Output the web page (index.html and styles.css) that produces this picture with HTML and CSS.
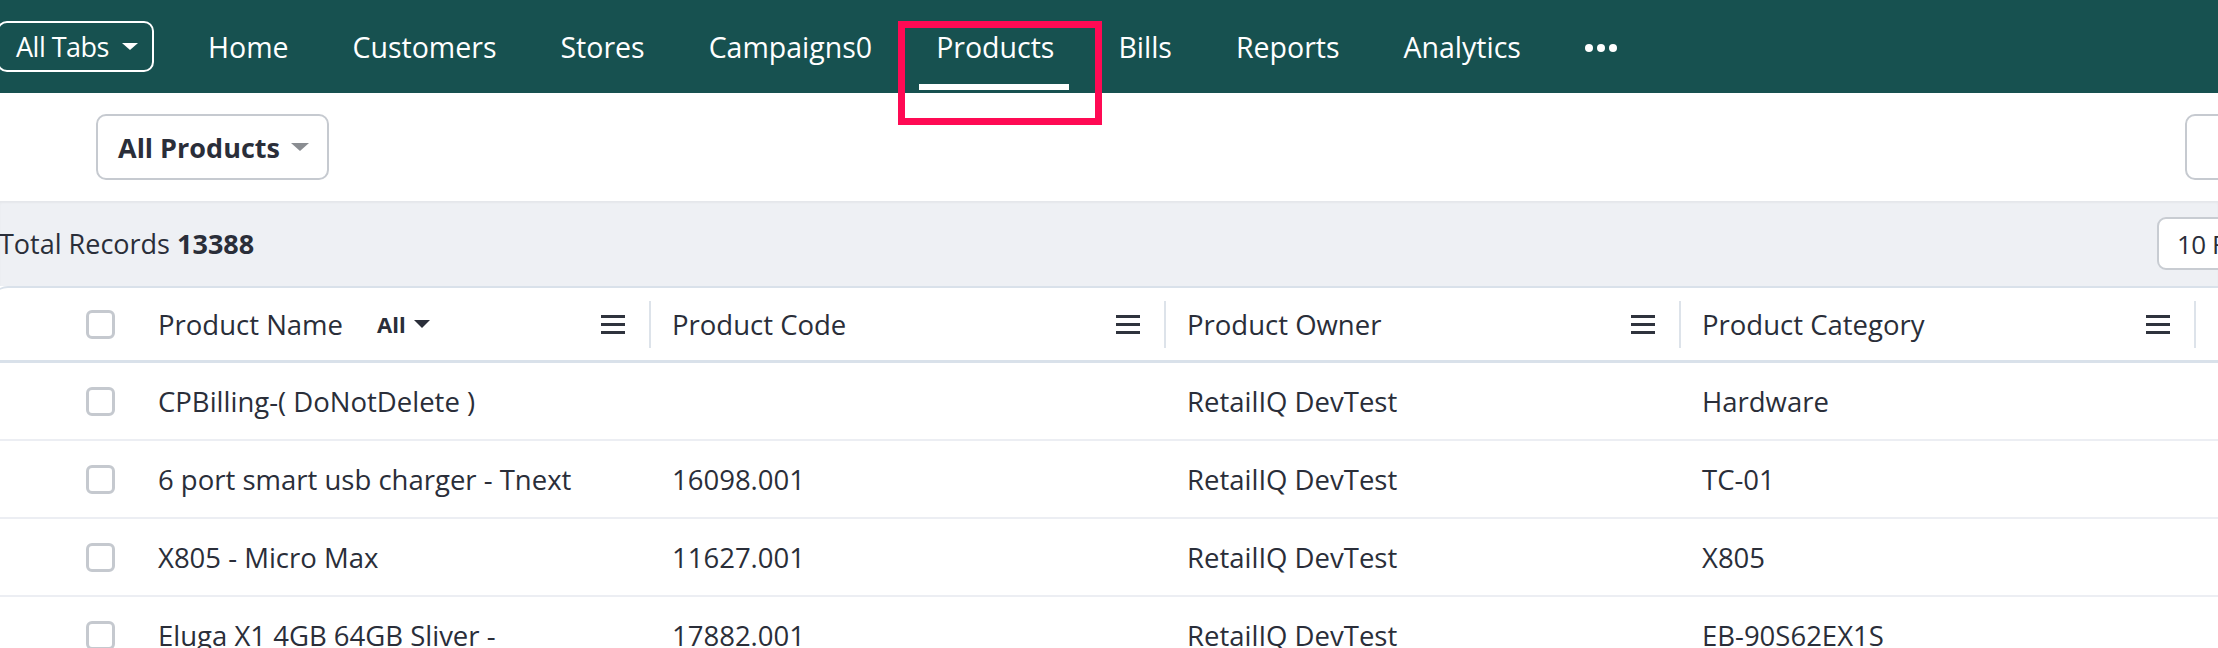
FILE: index.html
```html
<!DOCTYPE html>
<html lang="en">
<head>
  <meta charset="UTF-8" />
  <title>Products</title>
  <link rel="stylesheet" href="styles.css">
</head>
<body>
  <!-- Top navigation -->
  <header class="topnav">
    <button class="tabs-btn">All Tabs <span class="caret-white"></span></button>
    <nav class="nav-links">
      <a class="nav-link">Home</a>
      <a class="nav-link">Customers</a>
      <a class="nav-link">Stores</a>
      <a class="nav-link">Campaigns0</a>
      <a class="nav-link active">Products<span class="underline"></span><span class="highlight"></span></a>
      <a class="nav-link">Bills</a>
      <a class="nav-link">Reports</a>
      <a class="nav-link">Analytics</a>
      <a class="nav-link more">
        <svg width="32" height="10" viewBox="0 0 32 10"><circle cx="4" cy="5" r="4" fill="#fff"/><circle cx="16" cy="5" r="4" fill="#fff"/><circle cx="28" cy="5" r="4" fill="#fff"/></svg>
      </a>
    </nav>
  </header>

  <!-- View toolbar -->
  <div class="toolbar">
    <button class="view-btn">All Products <span class="caret-gray"></span></button>
    <button class="action-btn"></button>
  </div>

  <div class="records-bar">
    <span class="total">Total Records <b>13388</b></span>
    <div class="per-page">10 Records</div>
  </div>

  <!-- Products table -->
  <div class="table">
    <div class="row head">
      <div class="cell">
        <div class="th first">
          <span class="checkbox"></span>
          <span class="th-label">Product Name</span>
          <span class="filter">All <span class="caret-dark"></span></span>
          <svg class="menu" width="24" height="20" viewBox="0 0 24 20"><rect y="1" width="24" height="3" fill="#2f333d"/><rect y="9" width="24" height="3" fill="#2f333d"/><rect y="17" width="24" height="3" fill="#2f333d"/></svg>
        </div>
      </div>
      <div class="cell">
        <div class="th">
          <span class="th-label">Product Code</span>
          <svg class="menu" width="24" height="20" viewBox="0 0 24 20"><rect y="1" width="24" height="3" fill="#2f333d"/><rect y="9" width="24" height="3" fill="#2f333d"/><rect y="17" width="24" height="3" fill="#2f333d"/></svg>
        </div>
      </div>
      <div class="cell">
        <div class="th">
          <span class="th-label">Product Owner</span>
          <svg class="menu" width="24" height="20" viewBox="0 0 24 20"><rect y="1" width="24" height="3" fill="#2f333d"/><rect y="9" width="24" height="3" fill="#2f333d"/><rect y="17" width="24" height="3" fill="#2f333d"/></svg>
        </div>
      </div>
      <div class="cell">
        <div class="th">
          <span class="th-label">Product Category</span>
          <svg class="menu" width="24" height="20" viewBox="0 0 24 20"><rect y="1" width="24" height="3" fill="#2f333d"/><rect y="9" width="24" height="3" fill="#2f333d"/><rect y="17" width="24" height="3" fill="#2f333d"/></svg>
        </div>
      </div>
      <div class="cell">
        <div class="th last"><span class="th-label muted">Unit Price</span></div>
      </div>
    </div>

    <div class="row">
      <div class="cell first"><span class="checkbox"></span>CPBilling-( DoNotDelete )</div>
      <div class="cell"></div>
      <div class="cell">RetailIQ DevTest</div>
      <div class="cell">Hardware</div>
      <div class="cell">Rs.0.00</div>
    </div>
    <div class="row">
      <div class="cell first"><span class="checkbox"></span>6 port smart usb charger - Tnext</div>
      <div class="cell">16098.001</div>
      <div class="cell">RetailIQ DevTest</div>
      <div class="cell">TC-01</div>
      <div class="cell">Rs.0.00</div>
    </div>
    <div class="row">
      <div class="cell first"><span class="checkbox"></span>X805 - Micro Max</div>
      <div class="cell">11627.001</div>
      <div class="cell">RetailIQ DevTest</div>
      <div class="cell">X805</div>
      <div class="cell">Rs.0.00</div>
    </div>
    <div class="row">
      <div class="cell first"><span class="checkbox"></span>Eluga X1 4GB 64GB Sliver -</div>
      <div class="cell">17882.001</div>
      <div class="cell">RetailIQ DevTest</div>
      <div class="cell">EB-90S62EX1S</div>
      <div class="cell">Rs.0.00</div>
    </div>
  </div>
</body>
</html>
```

FILE: styles.css
```css
:root {
  --nav-bg: #175150;
  --text: #2a2e39;
  --line: #d9e1ea;
  --row-line: #eceef3;
  --gray-bg: #eef0f4;
  --mark: #ff0a54;
}

body {
  margin: 0;
  width: 2218px;
  height: 648px;
  overflow: hidden;
  font-family: 'Open Sans', 'Liberation Sans', sans-serif;
  color: var(--text);
  background: #fff;
}

/* top nav */
.topnav {
  display: flex;
  align-items: center;
  height: 93px;
  background: var(--nav-bg);
}

.tabs-btn {
  display: flex;
  align-items: center;
  gap: 13px;
  height: 51px;
  margin-left: -3px;
  padding: 0 14px 0 17px;
  background: transparent;
  border: 2px solid #fff;
  border-radius: 10px;
  color: #fff;
  font-family: inherit;
  font-size: 27px;
  letter-spacing: -0.5px;
}

.caret-white {
  width: 0;
  height: 0;
  border-left: 8px solid transparent;
  border-right: 8px solid transparent;
  border-top: 7px solid #fff;
}

.nav-links {
  display: flex;
  height: 100%;
  margin-left: 22px;
}

.nav-link {
  position: relative;
  display: flex;
  align-items: center;
  padding: 0 32px;
  color: #fff;
  font-size: 28.5px;
  cursor: pointer;
}

.nav-link.more {
  padding-top: 2px;
}

.nav-link .underline {
  position: absolute;
  left: 15px;
  right: 17px;
  bottom: 3px;
  height: 6px;
  background: #fff;
}

/* annotation box round the active tab */
.nav-link .highlight {
  position: absolute;
  left: -6px;
  right: -16px;
  top: 21px;
  bottom: -32px;
  border: 7px solid var(--mark);
  z-index: 5;
}

/* toolbar */
.toolbar {
  display: flex;
  align-items: center;
  justify-content: space-between;
  height: 108px;
  padding-left: 96px;
}

.view-btn {
  display: flex;
  align-items: center;
  gap: 11px;
  height: 66px;
  padding: 0 18px 0 20px;
  background: #fff;
  border: 2px solid #c6cad0;
  border-radius: 10px;
  color: var(--text);
  font-family: inherit;
  font-size: 27px;
  font-weight: 700;
}

.caret-gray {
  width: 0;
  height: 0;
  border-left: 9px solid transparent;
  border-right: 9px solid transparent;
  border-top: 8px solid #8a8d92;
}

.action-btn {
  width: 120px;
  height: 66px;
  margin-right: -87px;
  background: #fff;
  border: 2px solid #c6cad0;
  border-radius: 10px;
}

/* records bar */
.records-bar {
  display: flex;
  align-items: center;
  justify-content: space-between;
  height: 85px;
  background: var(--gray-bg);
  box-shadow: inset 0 2px 2px rgba(0,0,0,0.04);
}

.total {
  font-size: 27px;
  margin-left: -1px;
}

.total b {
  font-weight: 700;
}

.per-page {
  width: 150px;
  height: 53px;
  margin-right: -89px;
  box-sizing: border-box;
  padding-left: 18px;
  display: flex;
  align-items: center;
  background: #fff;
  border: 2px solid #c8ccd2;
  border-radius: 9px;
  font-size: 26px;
  letter-spacing: -0.5px;
  white-space: nowrap;
}

/* table */
.table {
  margin-left: -8px;
  width: 2800px;
  background: #fff;
  border-top: 2px solid var(--line);
  border-top-left-radius: 16px;
}

.row {
  display: grid;
  grid-template-columns: 659px 515px 515px 515px 515px;
  height: 76px;
  border-bottom: 2px solid var(--row-line);
  font-size: 27.5px;
}

.row.head {
  height: 72px;
  border-bottom: 3px solid var(--line);
}

.cell {
  display: flex;
  align-items: center;
  padding-left: 21px;
  white-space: nowrap;
}

.row .cell:first-child {
  padding-left: 94px;
}

.row.head .cell {
  padding-left: 0;
}

.th {
  display: flex;
  align-items: center;
  width: 100%;
  height: 47px;
  padding: 0 24px 0 21px;
  border-right: 2px solid #dde3ea;
  box-sizing: border-box;
}

.th.first {
  padding-left: 94px;
}

.th.last {
  border-right: none;
}

.th-label.muted {
  color: #c9ccd1;
}

.menu {
  margin-left: auto;
}

.filter {
  display: flex;
  align-items: center;
  gap: 8px;
  margin-left: 34px;
  font-size: 22px;
  font-weight: 700;
}

.caret-dark {
  width: 0;
  height: 0;
  border-left: 8px solid transparent;
  border-right: 8px solid transparent;
  border-top: 8px solid var(--text);
}

.checkbox {
  width: 29px;
  height: 29px;
  box-sizing: border-box;
  margin-right: 43px;
  border: 3px solid #c5c9cf;
  border-radius: 6px;
  flex-shrink: 0;
}
```
